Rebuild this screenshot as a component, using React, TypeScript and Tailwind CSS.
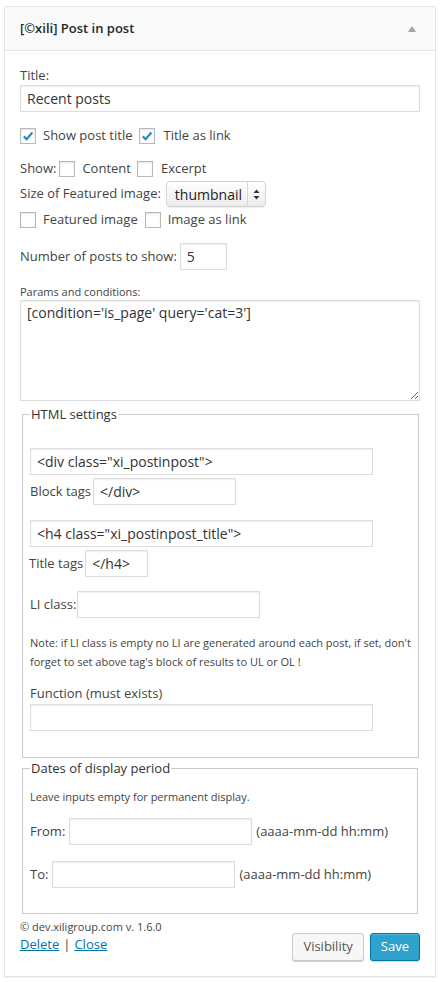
import React from 'react';

function Check({ checked }: { checked?: boolean }) {
  return (
    <span className="inline-flex items-center justify-center w-[16px] h-[16px] shrink-0 border border-[#b4b9be] bg-white shadow-[inset_0_1px_2px_rgba(0,0,0,0.1)]">
      {checked && (
        <svg width="12" height="12" viewBox="0 0 12 12">
          <path d="M1.8 6.4 L4.6 9.2 L10.4 2.6" fill="none" stroke="#1e8cbe" strokeWidth="2.2" />
        </svg>
      )}
    </span>
  );
}

function TextInput({ value = '', className = '' }: { value?: string; className?: string }) {
  return (
    <input
      readOnly
      value={value}
      className={`h-[27px] border border-[#ddd] bg-white px-[6px] text-[14px] text-[#333] shadow-[inset_0_1px_2px_rgba(0,0,0,0.07)] outline-none ${className}`}
    />
  );
}

function Fieldset({ legend, children, className = '' }: { legend: string; children: React.ReactNode; className?: string }) {
  return (
    <fieldset className={`mx-[2px] border border-[#c9c9c9] px-[7px] ${className}`}>
      <legend className="px-[1px] text-[13px] leading-[20px] text-[#333]">{legend}</legend>
      {children}
    </fieldset>
  );
}

export default function App() {
  return (
    <div className="min-h-screen bg-white pt-[6px] pl-[4px] font-['Open_Sans',sans-serif] text-[13px] text-[#444]">
      <div className="w-[432px] border border-[#e5e5e5] bg-white shadow-[0_1px_1px_rgba(0,0,0,0.04)]">
        {/* Header */}
        <div className="flex h-[44px] items-center justify-between border-b border-[#e5e5e5] bg-[#fafafa] pl-[15px] pr-[19px]">
          <span className="text-[13px] font-semibold text-[#23282d]">[©xili] Post in post</span>
          <svg width="8" height="6" viewBox="0 0 8 6" className="mt-[1px]">
            <path d="M4 0 L8 6 L0 6 Z" fill="#a0a5aa" />
          </svg>
        </div>

        {/* Body */}
        <div className="px-[15px] pt-[15px] pb-[15px]">
          <div className="leading-[18px]">Title:</div>
          <TextInput value="Recent posts" className="mt-[1px] w-full" />

          <div className="mt-[16px] flex h-[16px] items-center">
            <Check checked />
            <span className="ml-[7px] mr-[7px]">Show post title</span>
            <Check checked />
            <span className="ml-[8px]">Title as link</span>
          </div>

          <div className="mt-[17px] flex h-[16px] items-center">
            <span className="mr-[3px]">Show:</span>
            <Check />
            <span className="ml-[7px] mr-[6px]">Content</span>
            <Check />
            <span className="ml-[8px]">Excerpt</span>
          </div>

          <div className="mt-[4px] flex h-[26px] items-center">
            <span className="mr-[5px]">Size of Featured image:</span>
            <div className="flex h-[26px] w-[100px] items-center rounded-[4px] border border-[#d4d4d4] bg-gradient-to-b from-[#ffffff] to-[#ececec] shadow-[0_1px_1px_rgba(0,0,0,0.08)]">
              <span className="flex-1 pl-[8px] text-[14px] text-[#222]">thumbnail</span>
              <span className="flex h-full w-[18px] items-center justify-center border-l border-[#d8d8d8]">
                <svg width="7" height="11" viewBox="0 0 7 11">
                  <path d="M3.5 0.5 L6.5 4 L0.5 4 Z M3.5 10.5 L6.5 7 L0.5 7 Z" fill="#333" />
                </svg>
              </span>
            </div>
          </div>

          <div className="mt-[5px] flex h-[16px] items-center">
            <Check />
            <span className="ml-[7px] mr-[7px]">Featured image</span>
            <Check />
            <span className="ml-[7px]">Image as link</span>
          </div>

          <div className="mt-[15px] flex items-center">
            <span className="mr-[3px]">Number of posts to show:</span>
            <TextInput value="5" className="w-[47px]" />
          </div>

          <div className="mt-[15px] text-[11px] leading-[14px]">Params and conditions:</div>
          <textarea
            readOnly
            value="[condition='is_page' query='cat=3']"
            className="mt-[1px] block h-[101px] w-full border border-[#ddd] bg-white px-[6px] pt-[2px] text-[14px] leading-[20px] text-[#333] shadow-[inset_0_1px_2px_rgba(0,0,0,0.07)] outline-none"
          />

          <Fieldset legend="HTML settings" className="mt-[3px] pb-[26px]">
            <TextInput value={'<div class="xi_postinpost">'} className="mt-[24px] block w-[343px]" />
            <div className="mt-[3px] flex items-center">
              <span className="mr-[2px]">Block tags</span>
              <TextInput value="</div>" className="w-[143px]" />
            </div>
            <TextInput value={'<h4 class="xi_postinpost_title">'} className="mt-[15px] block w-[343px]" />
            <div className="mt-[3px] flex items-center">
              <span className="mr-[2px] -ml-[1px]">Title tags</span>
              <TextInput value="</h4>" className="w-[63px]" />
            </div>
            <div className="mt-[14px] flex items-center">
              <span className="mr-[1px]">LI class:</span>
              <TextInput className="w-[183px]" />
            </div>
            <p className="mt-[15px] text-[11px] leading-[19px] whitespace-nowrap">
              Note: if LI class is empty no LI are generated around each post, if set, don't
              <br />
              forget to set above tag's block of results to UL or OL !
            </p>
            <div className="mt-[13px] leading-[18px]">Function (must exists)</div>
            <TextInput className="mt-[2px] block w-[343px]" />
          </Fieldset>

          <Fieldset legend="Dates of display period" className="pb-[25px]">
            <p className="mt-[9px] text-[11px] leading-[19px]">Leave inputs empty for permanent display.</p>
            <div className="mt-[12px] flex items-center">
              <span className="mr-[4px]">From:</span>
              <TextInput className="w-[183px]" />
              <span className="ml-[4px]">(aaaa-mm-dd hh:mm)</span>
            </div>
            <div className="mt-[16px] flex items-center">
              <span className="mr-[4px]">To:</span>
              <TextInput className="w-[183px]" />
              <span className="ml-[4px]">(aaaa-mm-dd hh:mm)</span>
            </div>
          </Fieldset>

          {/* Footer */}
          <div className="mt-[5px] flex items-start justify-between">
            <div>
              <div className="text-[11px] leading-[16px]">© dev.xiligroup.com v. 1.6.0</div>
              <div className="leading-[18px]">
                <a href="#" className="text-[#0073aa] underline">Delete</a>
                <span className="mx-[4px]">|</span>
                <a href="#" className="text-[#0073aa] underline">Close</a>
              </div>
            </div>
            <div className="mt-[14px] flex gap-[6px]">
              <button className="h-[28px] rounded-[3px] border border-[#ccc] bg-[#f7f7f7] px-[10px] text-[13px] text-[#555] shadow-[0_1px_0_#ccc]">
                Visibility
              </button>
              <button className="h-[28px] rounded-[3px] border border-[#0074a2] bg-[#2ea2cc] px-[10px] text-[13px] text-white shadow-[inset_0_1px_0_rgba(120,200,230,0.5),0_1px_0_rgba(0,0,0,0.15)]">
                Save
              </button>
            </div>
          </div>
        </div>
      </div>
    </div>
  );
}
